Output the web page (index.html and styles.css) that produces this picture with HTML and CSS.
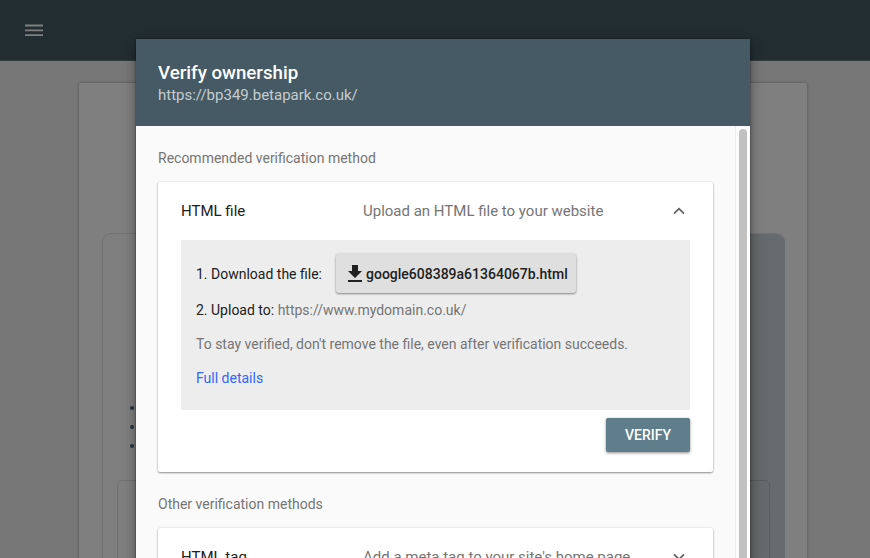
FILE: index.html
```html
<!DOCTYPE html>
<html lang="en">
<head>
    <meta charset="UTF-8">
    <meta name="viewport" content="width=device-width, initial-scale=1.0">
    <title>Verify ownership</title>
    <link rel="stylesheet" href="styles.css">
</head>
<body>
    <div class="page">
        <header class="top-bar">
            <svg class="menu-icon" viewBox="0 0 18 13" width="18" height="13">
                <path d="M0 0.6h18v1.8H0zM0 5.4h18v1.8H0zM0 10.2h18v1.8H0z" fill="#fff"/>
            </svg>
        </header>
        <main class="welcome-card">
            <div class="property-panel">
                <ul class="property-list">
                    <li></li>
                    <li></li>
                    <li></li>
                </ul>
                <div class="property-input"></div>
            </div>
        </main>
    </div>

    <div class="overlay">
        <div class="dialog">
            <div class="dialog-header">
                <h1 class="dialog-title">Verify ownership</h1>
                <div class="dialog-url">https://bp349.betapark.co.uk/</div>
            </div>
            <div class="dialog-body">
                <div class="dialog-content">
                    <h2 class="section-title">Recommended verification method</h2>
                    <div class="method">
                        <div class="method-header">
                            <span class="method-name">HTML file</span>
                            <span class="method-desc">Upload an HTML file to your website</span>
                            <svg class="chevron" viewBox="0 0 12 8" width="12" height="8">
                                <path d="M1 6.7L6 1.7L11 6.7" fill="none" stroke="#616161" stroke-width="1.8"/>
                            </svg>
                        </div>
                        <div class="steps">
                            <div class="step-download">
                                <span>1. Download the file:</span>
                                <button class="download-button">
                                    <svg viewBox="0 0 14 17" width="14" height="17">
                                        <path d="M4 0h6v6h4L7 13L0 6h4zM0 15h14v2H0z" fill="#212121"/>
                                    </svg>
                                    <span>google608389a61364067b.html</span>
                                </button>
                            </div>
                            <p class="step-upload">2. Upload to: <span class="muted">https://www.mydomain.co.uk/</span></p>
                            <p class="note">To stay verified, don't remove the file, even after verification succeeds.</p>
                            <a class="details-link" href="#">Full details</a>
                        </div>
                        <div class="method-actions">
                            <button class="verify-button">VERIFY</button>
                        </div>
                    </div>
                    <h2 class="section-title section-other">Other verification methods</h2>
                    <div class="method">
                        <div class="method-header">
                            <span class="method-name">HTML tag</span>
                            <span class="method-desc">Add a meta tag to your site's home page</span>
                            <svg class="chevron" viewBox="0 0 12 8" width="12" height="8">
                                <path d="M1 1.3L6 6.3L11 1.3" fill="none" stroke="#616161" stroke-width="1.8"/>
                            </svg>
                        </div>
                    </div>
                </div>
                <div class="scrollbar">
                    <div class="scrollbar-thumb"></div>
                </div>
            </div>
        </div>
    </div>
</body>
</html>
```

FILE: styles.css
```css
* {
    margin: 0;
    padding: 0;
    box-sizing: border-box;
}
body {
    font-family: Roboto, sans-serif;
    font-size: 14px;
    color: #212121;
    height: 558px;
    overflow: hidden;
    position: relative;
}

/* page behind the dialog */
.page {
    height: 558px;
    background: #eee;
    overflow: hidden;
}
.top-bar {
    height: 61px;
    background: #455a64;
    display: flex;
    align-items: center;
    padding-left: 25px;
    border-bottom: 1px solid #6b797f;
}
.menu-icon {
    display: block;
}
.welcome-card {
    width: 728px;
    height: 600px;
    margin: 22px 0 0 79px;
    padding: 150px 22px 0 23px;
    background: #fff;
    border-radius: 2px;
    box-shadow: 0 0 3px rgba(0, 0, 0, 0.35);
}
.property-panel {
    height: 450px;
    padding: 161px 15px 0 14px;
    border: 1px solid #e4e4e4;
    border-right: none;
    border-radius: 9px;
    background: linear-gradient(90deg, transparent 50%, #c6d0d1 50%, #c7cfd1 95%, #cbd7dd 98%);
}
.property-list {
    list-style: none;
    height: 74px;
    padding-left: 13px;
}
.property-list li {
    width: 4px;
    height: 4px;
    margin-top: 15px;
    border-radius: 50%;
    background: #56687a;
}
.property-list li:first-child {
    margin-top: 11px;
}
.property-input {
    height: 87px;
    border: 1px solid rgba(0, 0, 0, 0.12);
    border-radius: 5px;
}

/* dialog */
.overlay {
    position: absolute;
    top: 0;
    left: 0;
    width: 870px;
    height: 558px;
    padding: 39px 120px 0 136px;
    background: rgba(0, 0, 0, 0.5);
    overflow: hidden;
}
.dialog {
    height: 560px;
    background: #fafafa;
    box-shadow: 0 6px 12px rgba(0, 0, 0, 0.4), 0 0 2px rgba(0, 0, 0, 0.5);
}
.dialog-header {
    height: 87px;
    padding: 23px 22px 0;
    background: #455a64;
    color: #fff;
}
.dialog-title {
    font-size: 18.7px;
    line-height: 22px;
    font-weight: 500;
}
.dialog-url {
    font-size: 15px;
    line-height: 22px;
    color: rgba(255, 255, 255, 0.7);
}
.dialog-body {
    display: flex;
    height: 473px;
}
.dialog-content {
    flex: 1;
    padding: 22px 22px 0;
}
.section-title {
    font-size: 14px;
    line-height: 20px;
    font-weight: 400;
    color: #757575;
    margin-bottom: 14px;
}
.section-other {
    margin-top: 22px;
}
.method {
    padding: 0 23px 20px;
    background: #fff;
    border-radius: 2px;
    box-shadow: 0 1px 2px rgba(0, 0, 0, 0.4), 0 0 2px rgba(0, 0, 0, 0.15);
}
.method-header {
    display: flex;
    align-items: center;
    height: 58px;
    font-size: 15px;
}
.method-name {
    width: 182px;
}
.method-desc {
    flex: 1;
    color: #757575;
}
.chevron {
    margin-right: 5px;
}
.steps {
    height: 170px;
    padding: 14px 15px 0;
    background: #ededed;
    line-height: 20px;
}
.step-download {
    display: flex;
    align-items: center;
    gap: 14px;
}
.download-button {
    display: flex;
    align-items: center;
    gap: 4px;
    height: 39px;
    padding: 0 8px 0 12px;
    border: none;
    border-radius: 3px;
    background: #dfdfdf;
    color: #212121;
    font: 500 14px Roboto, sans-serif;
    box-shadow: 0 1px 2px rgba(0, 0, 0, 0.4), 0 0 3px rgba(0, 0, 0, 0.12);
}
.step-upload {
    margin-top: 7px;
}
.muted,
.note {
    color: #757575;
}
.note {
    margin: 14px 0;
}
.details-link {
    color: #3367f6;
    text-decoration: none;
}
.method-actions {
    display: flex;
    justify-content: flex-end;
    padding-top: 8px;
}
.verify-button {
    width: 84px;
    height: 34px;
    border: none;
    border-radius: 2px;
    background: #607d8b;
    color: #fff;
    font: 500 14px Roboto, sans-serif;
    box-shadow: 0 1px 3px rgba(0, 0, 0, 0.45);
}
.scrollbar {
    width: 15px;
    padding: 3px 3px 0;
    background: #fcfcfc;
    border-left: 1px solid #ededed;
}
.scrollbar-thumb {
    width: 8px;
    height: 480px;
    border-radius: 4px;
    background: #c1c1c1;
}
```
